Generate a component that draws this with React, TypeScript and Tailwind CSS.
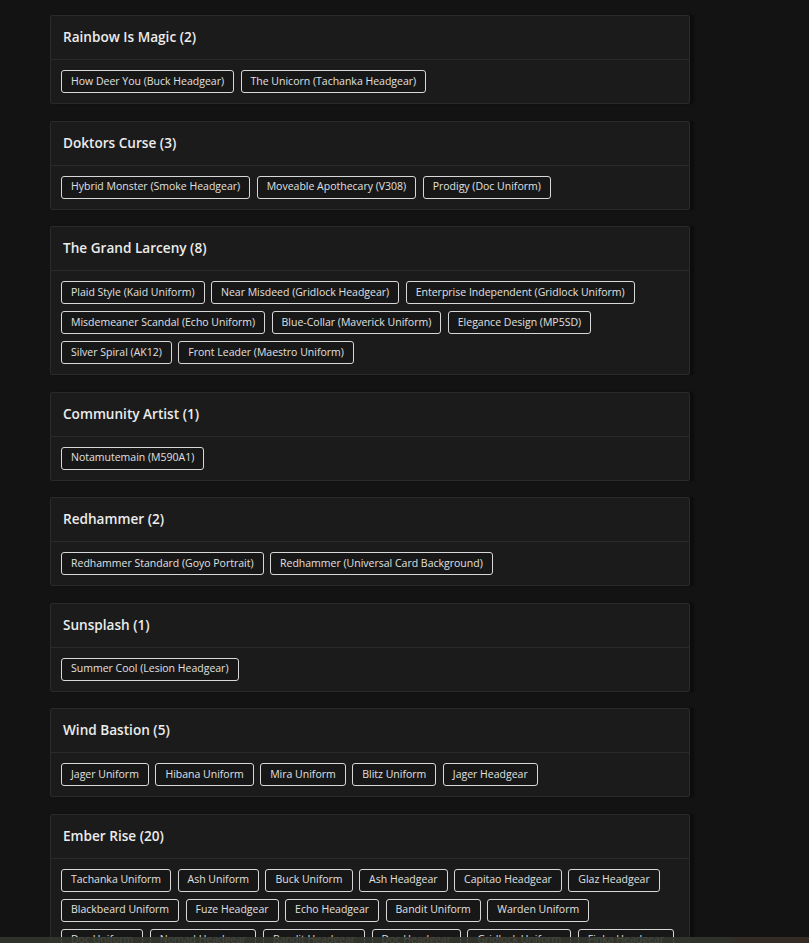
import React from "react";

const groups: { title: string; items: string[] }[] = [
  { title: "Rainbow Is Magic (2)", items: ["How Deer You (Buck Headgear)", "The Unicorn (Tachanka Headgear)"] },
  { title: "Doktors Curse (3)", items: ["Hybrid Monster (Smoke Headgear)", "Moveable Apothecary (V308)", "Prodigy (Doc Uniform)"] },
  {
    title: "The Grand Larceny (8)",
    items: [
      "Plaid Style (Kaid Uniform)",
      "Near Misdeed (Gridlock Headgear)",
      "Enterprise Independent (Gridlock Uniform)",
      "Misdemeaner Scandal (Echo Uniform)",
      "Blue-Collar (Maverick Uniform)",
      "Elegance Design (MP5SD)",
      "Silver Spiral (AK12)",
      "Front Leader (Maestro Uniform)",
    ],
  },
  { title: "Community Artist (1)", items: ["Notamutemain (M590A1)"] },
  { title: "Redhammer (2)", items: ["Redhammer Standard (Goyo Portrait)", "Redhammer (Universal Card Background)"] },
  { title: "Sunsplash (1)", items: ["Summer Cool (Lesion Headgear)"] },
  { title: "Wind Bastion (5)", items: ["Jager Uniform", "Hibana Uniform", "Mira Uniform", "Blitz Uniform", "Jager Headgear"] },
  {
    title: "Ember Rise (20)",
    items: [
      "Tachanka Uniform",
      "Ash Uniform",
      "Buck Uniform",
      "Ash Headgear",
      "Capitao Headgear",
      "Glaz Headgear",
      "Blackbeard Uniform",
      "Fuze Headgear",
      "Echo Headgear",
      "Bandit Uniform",
      "Warden Uniform",
      "Doc Uniform",
      "Nomad Headgear",
      "Bandit Headgear",
      "Doc Headgear",
      "Gridlock Uniform",
      "Finka Headgear",
      "Smoke Headgear",
      "Mute Uniform",
      "Nokk Headgear",
    ],
  },
];

export default function App() {
  return (
    <div
      className="min-h-screen bg-[#131313] pt-[15px] pb-10"
      style={{ fontFamily: '"Open Sans", "Liberation Sans", sans-serif' }}
    >
      <div className="ml-[50px] w-[640px] flex flex-col gap-[16.5px]">
        {groups.map((g) => (
          <div
            key={g.title}
            className="bg-[#1b1b1b] border border-[#2a2a2a] rounded-[2px] shadow-[4px_0_2px_rgba(0,0,0,0.35)]"
          >
            <div className="h-[44px] flex items-center px-[12px] border-b border-[#2b2b2b]">
              <span className="text-[13.6px] font-semibold text-[#ececec]">{g.title}</span>
            </div>
            <div className="flex flex-wrap gap-x-[6.5px] gap-y-[7px] pl-[10px] pr-[12.5px] py-[10px]">
              {g.items.map((it) => (
                <span
                  key={it}
                  className="h-[23px] flex items-center px-[9px] border border-[#d8d8d8] rounded-[3px] text-[10.5px] text-[#e0e0e0] bg-[#171717] whitespace-nowrap"
                >
                  {it}
                </span>
              ))}
            </div>
          </div>
        ))}
      </div>
      <div className="fixed left-0 right-0 bottom-0 h-[6px] bg-[linear-gradient(90deg,#34372e_0%,#34372e_90%,#3a2f28_91%,#3a2f28_100%)] opacity-90" />
    </div>
  );
}
